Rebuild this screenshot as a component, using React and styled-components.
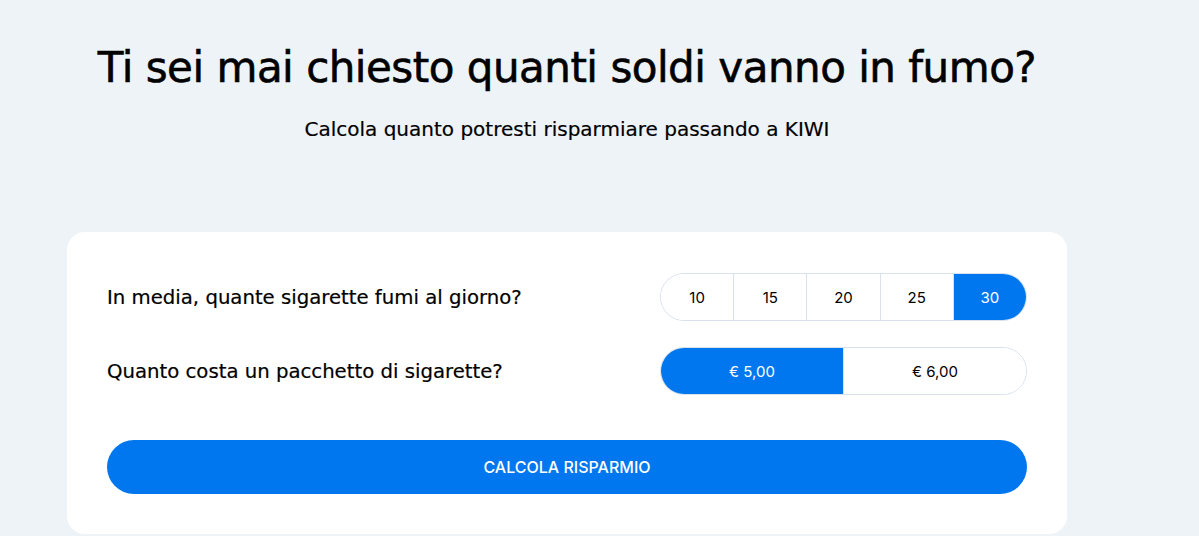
import React, { useState } from "react";
import styled, { createGlobalStyle } from "styled-components";

const GlobalStyle = createGlobalStyle`
  html, body {
    margin: 0;
    padding: 0;
    background-color: #eef3f8;
  }
  body {
    font-family: "DejaVu Sans", "Lato", sans-serif;
    color: #000;
  }
`;

const Page = styled.div`
  width: 1000px;
  margin-left: 67px;
  padding-top: 42px;
`;

const Title = styled.h1`
  margin: 0;
  font-size: 42px;
  font-weight: 400;
  line-height: 52px;
  text-align: center;
  letter-spacing: -0.5px;
  -webkit-text-stroke: 0.6px #000;
`;

const Subtitle = styled.p`
  margin: 23px 0 0;
  font-size: 20px;
  font-weight: 400;
  line-height: 24px;
  text-align: center;
  -webkit-text-stroke: 0.2px #000;
`;

const Card = styled.div`
  margin-top: 91px;
  background-color: #fff;
  border-radius: 18px;
  padding: 41px 40px 40px;
  display: flex;
  flex-direction: column;
`;

const Row = styled.div`
  display: flex;
  align-items: center;
  justify-content: space-between;
  & + & {
    margin-top: 26px;
  }
`;

const Question = styled.span`
  font-size: 19.7px;
  font-weight: 400;
  -webkit-text-stroke: 0.2px #000;
`;

const Segments = styled.div`
  width: 367px;
  height: 48px;
  display: flex;
  box-sizing: border-box;
  border: 1px solid #d9e2ec;
  border-radius: 24px;
  overflow: hidden;
`;

const Segment = styled.button`
  flex: 1;
  border: 0;
  margin: 0;
  padding: 0;
  font-family: "Inter", "Roboto", sans-serif;
  font-size: 15px;
  color: ${(props) => (props.$active ? "#fff" : "#000")};
  background-color: ${(props) => (props.$active ? "#0077ee" : "#fff")};
  cursor: pointer;
  & + & {
    border-left: 1px solid #d9e2ec;
  }
`;

const SubmitButton = styled.button`
  margin-top: 45px;
  height: 54px;
  width: 100%;
  border: 0;
  border-radius: 27px;
  background-color: #0077ee;
  color: #fff;
  font-family: "Inter", "Roboto", sans-serif;
  font-size: 16px;
  font-weight: 500;
  cursor: pointer;
`;

const counts = [10, 15, 20, 25, 30];
const prices = ["€ 5,00", "€ 6,00"];

export default function App() {
  const [count, setCount] = useState(30);
  const [price, setPrice] = useState(prices[0]);
  return (
    <>
      <GlobalStyle />
      <Page>
        <Title>Ti sei mai chiesto quanti soldi vanno in fumo?</Title>
        <Subtitle>Calcola quanto potresti risparmiare passando a KIWI</Subtitle>
        <Card>
          <Row>
            <Question>In media, quante sigarette fumi al giorno?</Question>
            <Segments>
              {counts.map((c) => (
                <Segment key={c} $active={c === count} onClick={() => setCount(c)}>
                  {c}
                </Segment>
              ))}
            </Segments>
          </Row>
          <Row>
            <Question>Quanto costa un pacchetto di sigarette?</Question>
            <Segments>
              {prices.map((p) => (
                <Segment key={p} $active={p === price} onClick={() => setPrice(p)}>
                  {p}
                </Segment>
              ))}
            </Segments>
          </Row>
          <SubmitButton>CALCOLA RISPARMIO</SubmitButton>
        </Card>
      </Page>
    </>
  );
}
